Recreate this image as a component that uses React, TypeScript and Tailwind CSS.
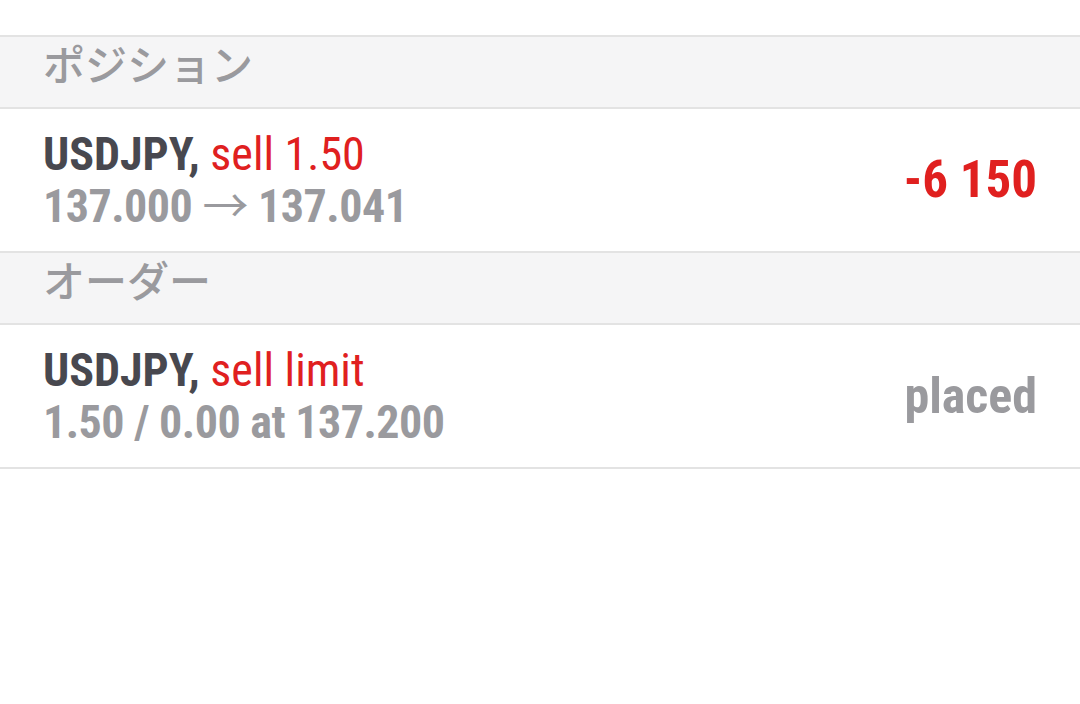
const font = { fontFamily: "'Roboto Condensed', Roboto, 'Noto Sans CJK JP', sans-serif" }

function SectionHeader({ title }: { title: string }) {
  return (
    <div className="h-[72px] border-b-2 border-[#e3e3e3] bg-[#f5f5f6] px-[43px] pb-[18px] flex items-center">
      <span className="text-[42px] text-[#9a9a9e] font-medium leading-none" style={{ fontFamily: "'Noto Sans CJK JP', sans-serif" }}>{title}</span>
    </div>
  )
}

function Row({ action, detail, value, valueClass }: { action: string; detail: React.ReactNode; value: string; valueClass: string }) {
  return (
    <div className="h-[144px] border-b-2 border-[#e3e3e3] px-[43px] flex items-center justify-between">
      <div className="flex flex-col font-stretch-condensed" style={font}>
        <div className="text-[46px] leading-[52px]">
          <span className="font-bold text-[#48484f]">USDJPY,</span>{' '}
          <span className="text-[#e0201f]">{action}</span>
        </div>
        <div className="text-[46px] leading-[52px] font-bold tracking-[-0.5px] text-[#9a9a9e]">{detail}</div>
      </div>
      <div className={`font-bold font-stretch-condensed ${valueClass}`} style={font}>{value}</div>
    </div>
  )
}

export default function App() {
  return (
    <div className="min-h-screen bg-white pt-[35px]">
      <div className="border-t-2 border-[#e3e3e3]">
        <SectionHeader title="ポジション" />
        <Row
          action="sell 1.50"
          detail={<>137.000 <span className="font-normal">→</span> 137.041</>}
          value="-6 150"
          valueClass="text-[51px] text-[#e0201f]"
        />
        <SectionHeader title="オーダー" />
        <Row
          action="sell limit"
          detail="1.50 / 0.00 at 137.200"
          value="placed"
          valueClass="text-[50px] text-[#9a9a9e]"
        />
      </div>
    </div>
  )
}
